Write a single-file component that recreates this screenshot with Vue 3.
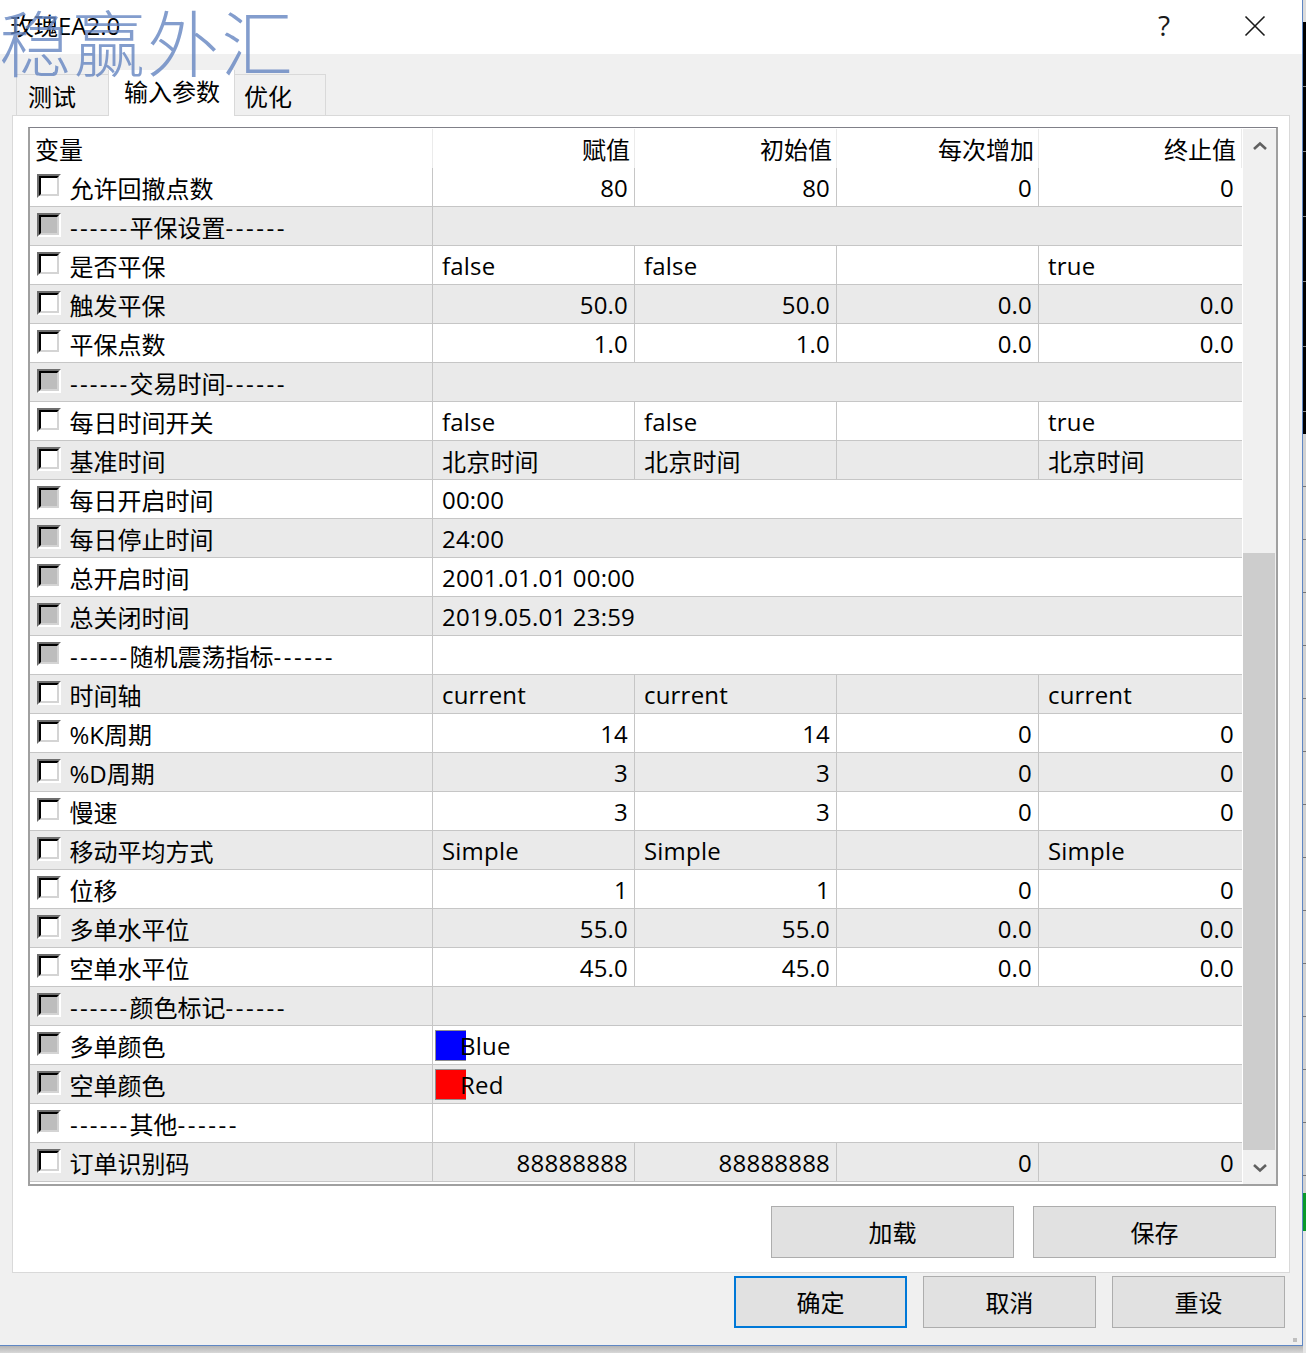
<script setup>
const headers = ['变量', '赋值', '初始值', '每次增加', '终止值']

// kind: num = 右对齐数字, enum = 左对齐, span = 跨列, section = 分组标题, color = 颜色块
const rows = [
  { name: '允许回撤点数', kind: 'num', vals: ['80', '80', '0', '0'] },
  { name: '平保设置', kind: 'section', off: true },
  { name: '是否平保', kind: 'enum', vals: ['false', 'false', '', 'true'] },
  { name: '触发平保', kind: 'num', vals: ['50.0', '50.0', '0.0', '0.0'] },
  { name: '平保点数', kind: 'num', vals: ['1.0', '1.0', '0.0', '0.0'] },
  { name: '交易时间', kind: 'section', off: true },
  { name: '每日时间开关', kind: 'enum', vals: ['false', 'false', '', 'true'] },
  { name: '基准时间', kind: 'enum', vals: ['北京时间', '北京时间', '', '北京时间'] },
  { name: '每日开启时间', kind: 'span', text: '00:00', off: true },
  { name: '每日停止时间', kind: 'span', text: '24:00', off: true },
  { name: '总开启时间', kind: 'span', text: '2001.01.01 00:00', off: true },
  { name: '总关闭时间', kind: 'span', text: '2019.05.01 23:59', off: true },
  { name: '随机震荡指标', kind: 'section', off: true },
  { name: '时间轴', kind: 'enum', vals: ['current', 'current', '', 'current'] },
  { name: '%K周期', kind: 'num', vals: ['14', '14', '0', '0'] },
  { name: '%D周期', kind: 'num', vals: ['3', '3', '0', '0'] },
  { name: '慢速', kind: 'num', vals: ['3', '3', '0', '0'] },
  { name: '移动平均方式', kind: 'enum', vals: ['Simple', 'Simple', '', 'Simple'] },
  { name: '位移', kind: 'num', vals: ['1', '1', '0', '0'] },
  { name: '多单水平位', kind: 'num', vals: ['55.0', '55.0', '0.0', '0.0'] },
  { name: '空单水平位', kind: 'num', vals: ['45.0', '45.0', '0.0', '0.0'] },
  { name: '颜色标记', kind: 'section', off: true },
  { name: '多单颜色', kind: 'color', text: 'Blue', color: '#0000ff', off: true },
  { name: '空单颜色', kind: 'color', text: 'Red', color: '#ff0000', off: true },
  { name: '其他', kind: 'section', off: true },
  { name: '订单识别码', kind: 'num', vals: ['88888888', '88888888', '0', '0'] }
]
</script>

<template>
  <div class="page">
    <div class="left">
      <div class="window">
        <div class="titlebar">
          <span class="title">玫瑰EA2.0</span>
          <span class="help">?</span>
          <svg class="close" width="22" height="22" viewBox="0 0 22 22">
            <path d="M1.5 1.5 L20.5 20.5 M20.5 1.5 L1.5 20.5" stroke="#1a1a1a" stroke-width="1.6" fill="none" />
          </svg>
        </div>

        <div class="tabs">
          <div class="tab tab-first">测试</div>
          <div class="tab tab-active">输入参数</div>
          <div class="tab tab-last">优化</div>
        </div>

        <div class="panel">
          <div class="frame">
            <div class="grid">
              <div class="row head">
                <div v-for="(h, i) in headers" :key="h" class="cell" :class="{ right: i > 0, first: i === 0 }">{{ h }}</div>
              </div>
              <div v-for="(r, idx) in rows" :key="r.name" class="row" :class="{ gray: idx % 2 === 1 }">
                <div class="cell first">
                  <span class="check" :class="{ off: r.off }"><i></i></span>
                  <span v-if="r.kind === 'section'" class="name section"><span class="dash">------</span>{{ r.name }}<span class="dash dash-end">------</span></span>
                  <span v-else class="name">{{ r.name }}</span>
                </div>
                <template v-if="r.kind === 'num' || r.kind === 'enum'">
                  <div v-for="(v, i) in r.vals" :key="i" class="cell" :class="r.kind === 'num' ? 'num' : 'enum'">{{ v }}</div>
                </template>
                <div v-else-if="r.kind === 'section'" class="cell wide"></div>
                <div v-else-if="r.kind === 'span'" class="cell wide enum">{{ r.text }}</div>
                <div v-else class="cell wide swatch-cell">
                  <span class="swatch" :style="{ background: r.color }"></span>
                  <span class="swatch-text">{{ r.text }}</span>
                </div>
              </div>
            </div>
            <div class="scrollbar">
              <div class="arrow">
                <svg width="16" height="10" viewBox="0 0 16 10"><path d="M2 8 L8 2.5 L14 8" stroke="#606060" stroke-width="2.6" fill="none" /></svg>
              </div>
              <div class="track"></div>
              <div class="thumb"></div>
              <div class="arrow arrow-down">
                <svg width="16" height="10" viewBox="0 0 16 10"><path d="M2 2 L8 7.5 L14 2" stroke="#606060" stroke-width="2.6" fill="none" /></svg>
              </div>
            </div>
          </div>
          <div class="panel-btns">
            <button class="btn wide-btn">加载</button>
            <button class="btn wide-btn">保存</button>
          </div>
        </div>

        <div class="footer">
          <button class="btn foot-btn focus">确定</button>
          <button class="btn foot-btn">取消</button>
          <button class="btn foot-btn">重设</button>
        </div>
        <div class="grip"></div>
      </div>
      <div class="shadow"></div>
    </div>

    <div class="strip">
      <div class="s-top"></div>
      <div class="s-black"></div>
      <div class="s-gray"></div>
      <div class="s-green"></div>
      <div class="s-end"></div>
    </div>

    <div class="watermark">稳赢外汇</div>
  </div>
</template>

<style>
html, body { background: #d6d6d6; overflow: hidden; }
</style>

<style scoped>
.page {
  position: relative;
  display: flex;
  width: 1306px;
  height: 1353px;
  overflow: hidden;
  font-family: "Open Sans", "Noto Sans CJK SC", sans-serif;
  font-size: 24px;
  color: #000;
}
.left { width: 1303px; }
.window {
  position: relative;
  box-sizing: border-box;
  height: 1346px;
  background: #f0f0f0;
  border-right: 1px solid #5f87c4;
  border-bottom: 1px solid #5f87c4;
}
.shadow { height: 7px; background: linear-gradient(#b4b4b4, #d8d8d8); }

.titlebar {
  display: flex;
  align-items: center;
  height: 54px;
  background: #fff;
  padding: 0 36px 5px 10px;
  box-sizing: border-box;
}
.title { flex: 1; }
.help { font-size: 28px; margin-right: 74px; color: #1a1a1a; }
.close { display: block; position: relative; top: 1px; }

.tabs {
  display: flex;
  align-items: flex-end;
  height: 61px;
  padding-left: 16px;
}
.tab {
  box-sizing: border-box;
  height: 41px;
  padding: 2px 0 0 11px;
  line-height: 40px;
  border: 1px solid #d9d9d9;
  border-bottom: none;
  background: #f0f0f0;
}
.tab-first { width: 92px; border-right: none; }
.tab-last { width: 91px; padding-left: 9px; border-left: none; }
.tab-active {
  position: relative;
  z-index: 1;
  width: 127px;
  height: 46px;
  margin-bottom: -1px;
  padding: 0 0 0 15px;
  line-height: 44px;
  background: #fff;
  border-top: none;
}

.panel {
  box-sizing: border-box;
  height: 1158px;
  margin: 0 12px;
  padding: 11px 11px 0 15px;
  background: #fff;
  border: 1px solid #d9d9d9;
}
.frame {
  display: flex;
  box-sizing: border-box;
  width: 1250px;
  height: 1059px;
  padding-top: 1px;
  border: 2px solid #a0a0a0;
  border-top: 1px solid #808088;
}
.grid { width: 1212px; }
.row {
  display: grid;
  grid-template-columns: 403px 202px 202px 202px 203px;
  box-sizing: border-box;
  height: 39px;
  border-bottom: 1px solid #c6c6c6;
  background: #fff;
}
.row.gray { background: #eaeaea; }
.row.head { border-bottom: none; }
.head .cell { border-right-color: #ebebeb; padding-right: 4px; }
.head .cell:last-child { border-right: 1px solid #ebebeb; padding-right: 5px; }
.cell {
  display: flex;
  align-items: center;
  box-sizing: border-box;
  border-right: 1px solid #c6c6c6;
  white-space: nowrap;
  min-width: 0;
}
.cell:last-child { border-right: none; }
.head .first { padding-left: 5px; }
.right, .num { justify-content: flex-end; }
.num { padding-right: 6px; letter-spacing: 0.2px; }
.num:last-child { padding-right: 8px; }
.enum { padding-left: 9px; letter-spacing: 0.2px; }
.wide { grid-column: 2 / 6; }
.first { padding-left: 7px; }

.check {
  flex: none;
  box-sizing: border-box;
  width: 24px;
  height: 24px;
  margin: -2px 9px 0 0;
  border-style: solid;
  border-width: 2px;
  border-color: #6e6e6e #fff #fff #6e6e6e;
}
.check i {
  display: block;
  box-sizing: border-box;
  width: 20px;
  height: 20px;
  border-style: solid;
  border-width: 2px;
  border-color: #000 #d4d4d4 #d4d4d4 #000;
  background: #fff;
}
.check.off i { background: #bdbdbd; }
.name { margin-left: -0.5px; }
.section { margin-left: 0; }
.dash { letter-spacing: 2.2px; }
.dash-end { letter-spacing: 2.5px; }

.swatch-cell { position: relative; padding-left: 27px; }
.swatch {
  position: absolute;
  left: 2px;
  top: 4px;
  box-sizing: border-box;
  width: 31px;
  height: 31px;
  border: 1px solid #8f8f8f;
  border-right: none;
}
.swatch-text { position: relative; letter-spacing: 0.2px; }

.scrollbar {
  display: flex;
  flex-direction: column;
  width: 33px;
  margin-left: 1px;
  height: 1055px;
  background: #f0f0f0;
}
.arrow {
  display: flex;
  align-items: center;
  justify-content: center;
  height: 34px;
  flex: none;
}
.arrow-down { margin-top: auto; height: 33px; }
.track { height: 390px; flex: none; }
.thumb { height: 597px; width: 32px; flex: none; background: #cdcdcd; }

.panel-btns {
  display: flex;
  justify-content: flex-end;
  gap: 19px;
  margin-top: 20px;
  padding-right: 2px;
}
.btn {
  box-sizing: border-box;
  height: 52px;
  padding: 0 0 1px;
  background: #e1e1e1;
  border: 1px solid #adadad;
  border-radius: 0;
  font: inherit;
  color: #000;
}
.wide-btn { width: 243px; padding-bottom: 2px; }
.footer {
  display: flex;
  justify-content: flex-end;
  gap: 16px;
  margin-top: 3px;
  padding-right: 17px;
}
.foot-btn { width: 173px; }
.focus { border: 2px solid #0078d7; }
.grip {
  position: absolute;
  right: 5px;
  bottom: 3px;
  width: 4px;
  height: 4px;
  background: #bfbfbf;
}

.strip { display: flex; flex-direction: column; width: 3px; height: 1353px; }
.s-top { height: 22px; background: #dcdcdc; }
.s-black {
  height: 412px;
  background: repeating-linear-gradient(#000 0, #000 64px, #8a8a8a 64px, #8a8a8a 65px);
}
.s-gray {
  height: 759px;
  background: repeating-linear-gradient(#d2d2d2 0, #d2d2d2 52px, #777 52px, #777 53px);
}
.s-green { height: 38px; background: #0a9a2a; }
.s-end { flex: 1; background: #e6e6e6; }

.watermark {
  position: absolute;
  left: -1px;
  top: -8px;
  z-index: 5;
  font-family: "Noto Sans CJK SC", sans-serif;
  font-size: 72px;
  font-weight: 300;
  letter-spacing: 2px;
  line-height: 96px;
  color: rgba(100, 132, 192, 0.8);
  pointer-events: none;
}
</style>
